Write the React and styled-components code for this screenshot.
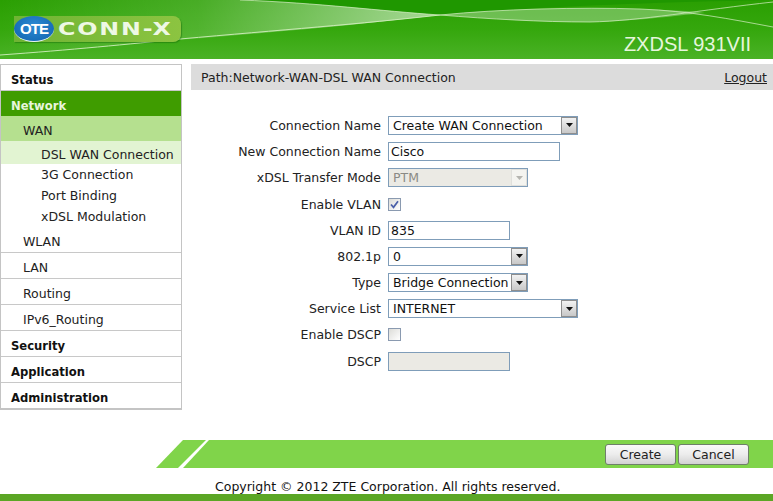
import styled, { createGlobalStyle } from "styled-components";

const GlobalStyle = createGlobalStyle`
  html, body {
    margin: 0;
    padding: 0;
    background: #fff;
  }
  body {
    font-family: "DejaVu Sans", Verdana, sans-serif;
    font-size: 12.5px;
    color: #222;
  }
  * {
    box-sizing: border-box;
  }
`;

const menu = [
  { label: "Status", level: "top" },
  { label: "Network", level: "top", active: true },
  { label: "WAN", level: "sub", active: true },
  { label: "DSL WAN Connection", level: "leaf", active: true },
  { label: "3G Connection", level: "leaf" },
  { label: "Port Binding", level: "leaf" },
  { label: "xDSL Modulation", level: "leaf" },
  { label: "WLAN", level: "sub" },
  { label: "LAN", level: "sub" },
  { label: "Routing", level: "sub" },
  { label: "IPv6_Routing", level: "sub" },
  { label: "Security", level: "top" },
  { label: "Application", level: "top" },
  { label: "Administration", level: "top" },
];

function Dropdown({ value, width, disabled }) {
  return (
    <Select $width={width} $disabled={disabled}>
      <SelectValue>{value}</SelectValue>
      <SelectArrow $disabled={disabled}>
        <svg width="7" height="4" viewBox="0 0 7 4">
          <path d="M0 0h7L3.5 4z" fill={disabled ? "#b5b5b0" : "#111"} />
        </svg>
      </SelectArrow>
    </Select>
  );
}

export default function App() {
  return (
    <Page>
      <GlobalStyle />
      <Header>
        <Swoosh viewBox="0 0 773 59">
          <defs>
            <linearGradient id="lens" x1="0" x2="1" y1="0" y2="0">
              <stop offset="0" stopColor="#fff" stopOpacity="0" />
              <stop offset="0.45" stopColor="#fff" stopOpacity="0.14" />
              <stop offset="1" stopColor="#fff" stopOpacity="0.58" />
            </linearGradient>
          </defs>
          <path d="M240 0C320 3 380 11 440 15C520 8 640 2 773 0V0Z" fill="#1f9700" />
          <path d="M0 55C120 44 300 32 440 15C380 11 320 3 240 0H0Z" fill="url(#lens)" />
          <path d="M440 15C500 9 580 7 640 9C670 10 690 11 705 13C670 16 640 21 590 22C540 22 490 19 440 15Z" fill="#fff" opacity="0.3" />
          <path d="M0 55C70 50 130 44 180 39C280 30 360 24 440 15" stroke="#d0edbc" fill="none" opacity="0.9" />
          <path d="M240 0C320 3 380 11 440 15C490 19 540 22 590 22C640 21 700 10 773 2" stroke="#d8f0c8" fill="none" opacity="0.7" />
          <path d="M440 15C500 9 580 7 640 9C690 11 730 19 773 27" stroke="#d8f0c8" fill="none" opacity="0.7" />
        </Swoosh>
        <Logo>
          <LogoOval>
            <LogoOte>OTE</LogoOte>
          </LogoOval>
          <LogoName>CONN-X</LogoName>
        </Logo>
        <Model>ZXDSL 931VII</Model>
      </Header>

      <Main>
        <Sidebar>
          {menu.map((item) => (
            <MenuItem key={item.label} $level={item.level} $active={item.active}>
              {item.label}
            </MenuItem>
          ))}
        </Sidebar>

        <Content>
          <PathBar>
            <span>Path:Network-WAN-DSL WAN Connection</span>
            <Logout href="#">Logout</Logout>
          </PathBar>

          <Form>
            <Label>Connection Name</Label>
            <Dropdown value="Create WAN Connection" width={190} />

            <Label>New Connection Name</Label>
            <TextInput $width={172} defaultValue="Cisco" />

            <Label>xDSL Transfer Mode</Label>
            <Dropdown value="PTM" width={140} disabled />

            <Label>Enable VLAN</Label>
            <CheckBox>
              <svg width="9" height="9" viewBox="0 0 9 9">
                <path d="M1 4.5l2.5 2.8L8 1.2" fill="none" stroke="#4a5fa8" strokeWidth="1.7" />
              </svg>
            </CheckBox>

            <Label>VLAN ID</Label>
            <TextInput $width={122} defaultValue="835" />

            <Label>802.1p</Label>
            <Dropdown value="0" width={140} />

            <Label>Type</Label>
            <Dropdown value="Bridge Connection" width={140} />

            <Label>Service List</Label>
            <Dropdown value="INTERNET" width={190} />

            <Label>Enable DSCP</Label>
            <CheckBox />

            <Label>DSCP</Label>
            <TextInput $width={122} disabled />
          </Form>
        </Content>
      </Main>

      <ActionBar>
        <ActionButton>Create</ActionButton>
        <ActionButton>Cancel</ActionButton>
      </ActionBar>

      <Copyright>Copyright © 2012 ZTE Corporation. All rights reserved.</Copyright>
      <BottomBar />
    </Page>
  );
}

const Page = styled.div`
  width: 773px;
  height: 501px;
  overflow: hidden;
  display: flex;
  flex-direction: column;
`;

const Header = styled.header`
  position: relative;
  height: 59px;
  flex: none;
  display: flex;
  align-items: flex-start;
  justify-content: space-between;
  overflow: hidden;
  background: linear-gradient(#2a9f02 0%, #35a70d 50%, #4ab226 100%);
`;

const Swoosh = styled.svg`
  position: absolute;
  inset: 0;
  width: 100%;
  height: 100%;
`;

const Logo = styled.div`
  position: relative;
  display: flex;
  align-items: center;
  margin: 16px 0 0 14px;
  width: 167px;
  height: 26px;
  border-radius: 0 8px 8px 0;
  background: linear-gradient(90deg, #6fb433, #8cc441);
  box-shadow: 1px 1px 1px rgba(0, 80, 0, 0.35);
`;

const LogoOval = styled.div`
  width: 40px;
  height: 26px;
  flex: none;
  border-radius: 50%;
  display: flex;
  align-items: center;
  justify-content: center;
  border-bottom: 1px solid #e6f2fa;
  background: radial-gradient(ellipse at 50% 40%, #2b8ad4, #0f62ac);
`;

const LogoOte = styled.span`
  font-family: "Liberation Sans", Arial, sans-serif;
  font-size: 15px;
  font-weight: 700;
  letter-spacing: -1px;
  color: #fff;
`;

const LogoName = styled.span`
  margin-left: 4px;
  font-family: "DejaVu Sans", Verdana, sans-serif;
  font-size: 18px;
  font-weight: 700;
  letter-spacing: 1.4px;
  line-height: 26px;
  color: #eef8e4;
  transform: scaleX(1.32);
  transform-origin: left center;
`;

const Model = styled.div`
  position: relative;
  margin: 34px 22px 0 0;
  font-family: "Liberation Sans", Arial, sans-serif;
  font-size: 20px;
  line-height: 20px;
  color: #e6f6dc;
`;

const Main = styled.div`
  display: flex;
  align-items: flex-start;
  padding-top: 5px;
  flex: none;
  height: 381px;
`;

const Sidebar = styled.nav`
  width: 182px;
  flex: none;
  border: 1px solid #c4c4c4;
  border-bottom-width: 2px;
`;

const menuStyles = {
  top: "padding: 4px 0 0 10px; height: 26px; border-bottom: 1px solid #c8c8c8; font-size: 11.6px; font-weight: 700; color: #111;",
  sub: "padding: 3px 0 0 22px; height: 26px; border-bottom: 1px solid #c8c8c8;",
  leaf: "padding-left: 40px; height: 21px;",
};

const MenuItem = styled.div`
  display: flex;
  align-items: center;
  white-space: nowrap;
  ${({ $level }) => menuStyles[$level]}
  ${({ $level, $active }) => $active && $level === "top" && "background: #3f9c00; color: #e8f5dc; height: 25px; border-bottom: 0;"}
  ${({ $level, $active }) => $active && $level === "sub" && "background: #b5e08f; height: 25px; border-bottom: 0;"}
  ${({ $level, $active }) => $active && $level === "leaf" && "background: #e2f4d2; height: 23px; padding-top: 3px;"}
  &:last-child {
    height: 25px;
    border-bottom: 0;
  }
`;

const Content = styled.main`
  flex: 1;
  min-width: 0;
  margin-left: 9px;
`;

const PathBar = styled.div`
  display: flex;
  align-items: center;
  justify-content: space-between;
  height: 26px;
  padding: 1px 6px 0 10px;
  background: #dcdcdc;
  color: #222;
`;

const Logout = styled.a`
  color: #222;
  text-decoration: underline;
`;

const Form = styled.form`
  display: grid;
  grid-template-columns: 190px 1fr;
  grid-auto-rows: 26.2px;
  column-gap: 7px;
  align-items: center;
  padding-top: 22.4px;
`;

const Label = styled.label`
  text-align: right;
  white-space: nowrap;
  color: #222;
`;

const Select = styled.div`
  display: flex;
  align-items: stretch;
  width: ${({ $width }) => $width}px;
  height: 19px;
  border: 1px solid #7f9db9;
  background: ${({ $disabled }) => ($disabled ? "#ebeae4" : "#fff")};
  color: ${({ $disabled }) => ($disabled ? "#8a8a85" : "#111")};
`;

const SelectValue = styled.span`
  flex: 1;
  min-width: 0;
  padding-left: 4px;
  line-height: 18px;
  white-space: nowrap;
  overflow: hidden;
`;

const SelectArrow = styled.span`
  width: 16px;
  flex: none;
  display: flex;
  align-items: center;
  justify-content: center;
  border: 1px solid ${({ $disabled }) => ($disabled ? "#e0e0dc" : "#8e8e8e")};
  background: ${({ $disabled }) => ($disabled ? "#f4f4f0" : "linear-gradient(#f2f2f2, #c8c8c8)")};
`;

const TextInput = styled.input`
  display: block;
  width: ${({ $width }) => $width}px;
  height: 19px;
  padding: 0 1px 0 2px;
  border: 1px solid #7f9db9;
  border-radius: 0;
  outline: 0;
  font: inherit;
  color: #111;
  &:disabled {
    background: #ebeae4;
  }
`;

const CheckBox = styled.span`
  width: 13px;
  height: 13px;
  display: flex;
  align-items: center;
  justify-content: center;
  border: 1px solid #8a9ab0;
  background: linear-gradient(135deg, #dcdcd8, #fff);
`;

const ActionBar = styled.div`
  position: relative;
  height: 28px;
  flex: none;
  margin-left: 156px;
  display: flex;
  align-items: center;
  justify-content: flex-end;
  gap: 2px;
  padding-right: 24px;
  background: #80d44a;
  clip-path: polygon(27px 0, 100% 0, 100% 100%, 0 100%);

  &::before {
    content: "";
    position: absolute;
    top: 0;
    left: 0;
    width: 60px;
    height: 100%;
    background: #fff;
    clip-path: polygon(50px 0, 53px 0, 27px 100%, 22px 100%);
  }
`;

const ActionButton = styled.button`
  width: 71px;
  height: 21px;
  padding: 0;
  border: 1px solid #6f7f6a;
  border-radius: 3px;
  font: inherit;
  color: #222;
  background: linear-gradient(#fafafa, #ececec 50%, #d2d2d2);
`;

const Copyright = styled.div`
  height: 26px;
  flex: none;
  padding: 11px 0 0 215px;
  line-height: 15px;
  white-space: nowrap;
  color: #111;
`;

const BottomBar = styled.div`
  height: 7px;
  flex: none;
  background: #5ba625;
`;
